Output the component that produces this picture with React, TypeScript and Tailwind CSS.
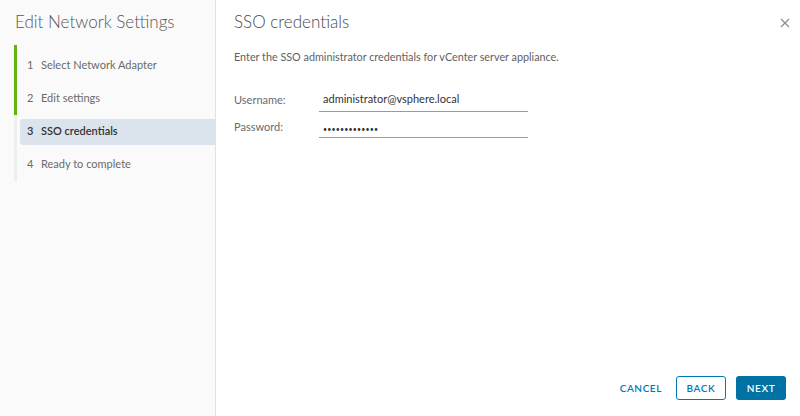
import React from 'react';

const steps = [
  { n: 1, label: 'Select Network Adapter', done: true },
  { n: 2, label: 'Edit settings', done: true },
  { n: 3, label: 'SSO credentials', active: true },
  { n: 4, label: 'Ready to complete' },
];

const App: React.FC = () => {
  return (
    <div className="w-[800px] h-[416px] flex bg-white text-[#565656] font-['Lato',sans-serif] overflow-hidden">
      {/* Wizard steps */}
      <aside className="w-[216px] shrink-0 bg-[#fafafa] border-r border-[#e2e2e2] pt-[10px]">
        <h1 className="pl-[15px] text-[17px] leading-[24px] font-light text-[#565656]">Edit Network Settings</h1>
        <ul className="mt-[11px] ml-[14px]">
          {steps.map((s) => (
            <li
              key={s.n}
              className={`flex border-l-[3px] ${s.done ? 'border-[#60b515]' : 'border-[#eeeeee]'} ${s.n === 1 ? 'pt-[4px]' : ''}`}
            >
              <div
                className={`flex-1 ml-[3px] h-[26px] my-[3.5px] flex items-center pl-[7px] rounded-l-[3px] text-[11px] ${
                  s.active ? 'bg-[#dbe4ec] text-[#333] font-semibold' : 'text-[#6a6a6a]'
                }`}
              >
                <span className="w-[14px]">{s.n}</span>
                <span>{s.label}</span>
              </div>
            </li>
          ))}
        </ul>
      </aside>

      {/* Content */}
      <main className="flex-1 flex flex-col pl-[18px] pr-[14px] pt-[10px] pb-[16px]">
        <div className="flex items-start justify-between">
          <h2 className="text-[17px] leading-[24px] font-light text-[#4a4a4a]">SSO credentials</h2>
          <button className="mt-[8px] -mr-[4px] text-[#8c8c8c]">
            <svg width="10" height="10" viewBox="0 0 10 10" fill="none" stroke="currentColor" strokeWidth="1.2">
              <path d="M1 1 L9 9 M9 1 L1 9" />
            </svg>
          </button>
        </div>
        <p className="mt-[15px] text-[10.8px] leading-[16px] text-[#5f5f5f]">
          Enter the SSO administrator credentials for vCenter server appliance.
        </p>

        <div className="mt-[26px] flex flex-col gap-[6px] text-[11px]">
          <div className="flex items-end">
            <span className="w-[85px] text-[#6a6a6a] pb-[3px]">Username:</span>
            <div className="w-[209px] border-b border-[#9a9a9a] pb-[3px] pl-[4px] text-[#333]">administrator@vsphere.local</div>
          </div>
          <div className="flex items-end">
            <span className="w-[85px] text-[#6a6a6a] pb-[2px]">Password:</span>
            <div className="w-[209px] h-[20px] border-b border-[#9a9a9a] pb-[3px] pl-[4px] flex items-end">
              <span className="text-[7px] leading-[10px] text-[#333] tracking-[0.2px]">•••••••••••••</span>
            </div>
          </div>
        </div>

        <div className="mt-auto flex items-center justify-end text-[10px] font-semibold tracking-[0.6px]">
          <button className="h-[24px] mr-[14px] text-[#0079b8]">CANCEL</button>
          <button className="h-[24px] w-[50px] mr-[10px] border border-[#0079b8] rounded-[3px] text-[#0079b8]">BACK</button>
          <button className="h-[24px] w-[50px] rounded-[3px] bg-[#0072a3] text-white">NEXT</button>
        </div>
      </main>
    </div>
  );
};

export default App;
